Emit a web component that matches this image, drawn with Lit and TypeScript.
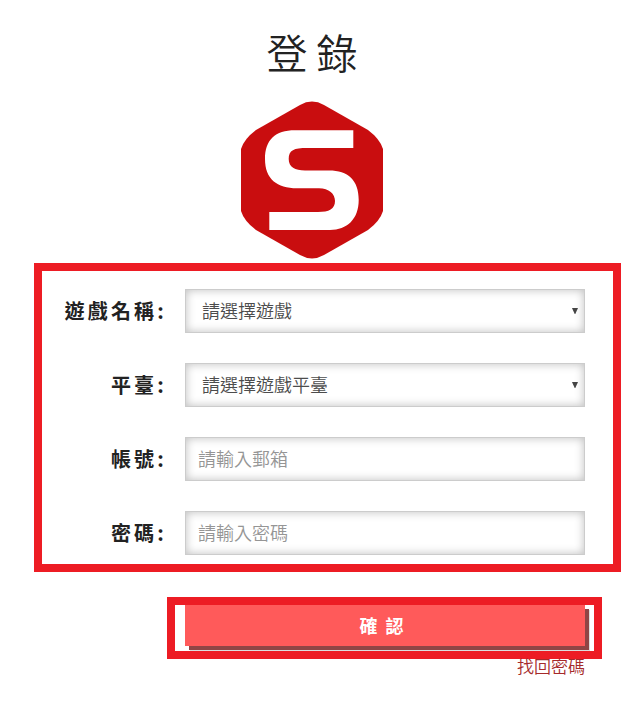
import { LitElement, html, css, svg } from 'lit';
import { customElement, property } from 'lit/decorators.js';

/**
 * Hexagon logo with the white "S" mark.
 */
@customElement('brand-logo')
export class BrandLogo extends LitElement {
  static styles = css`
    :host {
      display: block;
      width: 142px;
      height: 158px;
    }

    svg {
      display: block;
    }
  `;

  render() {
    return html`
      <svg width="142" height="158" viewBox="0 0 142 158" aria-hidden="true">
        ${svg`
          <path fill="#c90d0f" d="M59 4 Q71 -2.8 83 4 L127 29 Q139 38 142 48 V110 Q139 120 127 129 L83 154 Q71 160.8 59 154 L15 129 Q3 120 0 110 V48 Q3 38 15 29Z" />
          <path fill="#fff" d="M112.3 29.3 V47 H66 C53 47 47.7 49 47.7 58 C47.7 66 54 69.5 64 69.5 H88 C107 69.5 117.7 79 117.7 99 C117.7 118 106 129 89 129 H28.3 V111 H77 C88 111 94 108 94 100 C94 93 88 87.3 78 87.3 H56 C36 87.3 24 78 24 58 C24 39 34 29.3 54 29.3Z" />
        `}
      </svg>
    `;
  }
}

/**
 * Labelled form row. Renders a select when kind is "select", an input otherwise.
 */
@customElement('form-row')
export class FormRow extends LitElement {
  @property() label = '';
  @property() hint = '';
  @property() kind = 'text';

  static styles = css`
    :host {
      display: flex;
      align-items: center;
      height: 44px;
    }

    .label {
      width: 125px;
      margin-right: 18px;
      text-align: right;
      font-size: 20px;
      font-weight: 700;
      letter-spacing: 3.2px;
      line-height: 44px;
      white-space: nowrap;
      color: #222;
    }

    .field {
      display: flex;
      position: relative;
      width: 400px;
      height: 44px;
    }

    .control {
      appearance: none;
      box-sizing: border-box;
      width: 100%;
      height: 100%;
      margin: 0;
      padding: 0 13px 2px 12px;
      border: 1px solid #ccc;
      border-radius: 0;
      background: #fff;
      box-shadow: inset 0 0 10px rgba(0, 0, 0, 0.26);
      font-family: inherit;
      font-size: 18px;
      font-weight: 350;
      color: #4c4c4c;
      outline: none;
    }

    select.control {
      padding-left: 16px;
    }

    .control::placeholder {
      color: #959595;
      opacity: 1;
    }

    .arrow {
      position: absolute;
      right: 7px;
      top: 19px;
      pointer-events: none;
    }
  `;

  renderControl() {
    if (this.kind === 'select') {
      return html`
        <select class="control">
          <option>${this.hint}</option>
        </select>
        <svg class="arrow" width="6" height="6" viewBox="0 0 6 6">
          <path fill="#444" d="M0 0H6L3.3 6H2.7Z" />
        </svg>
      `;
    }
    return html`<input class="control" type=${this.kind} placeholder=${this.hint} />`;
  }

  render() {
    return html`
      <span class="label">${this.label}:</span>
      <div class="field">${this.renderControl()}</div>
    `;
  }
}

const ROWS = [
  { label: '遊戲名稱', hint: '請選擇遊戲', kind: 'select' },
  { label: '平臺', hint: '請選擇遊戲平臺', kind: 'select' },
  { label: '帳號', hint: '請輸入郵箱', kind: 'text' },
  { label: '密碼', hint: '請輸入密碼', kind: 'password' },
];

@customElement('app-root')
export class AppRoot extends LitElement {
  static styles = css`
    :host {
      display: flex;
      flex-direction: column;
      box-sizing: border-box;
      width: 644px;
      height: 710px;
      padding-top: 20px;
      background: #fff;
      font-family: 'Noto Sans CJK TC', sans-serif;
    }

    .header {
      display: flex;
      flex-direction: column;
      align-items: center;
      width: 624px;
    }

    .title {
      margin: 0 0 19px;
      font-size: 41px;
      font-weight: 350;
      line-height: 62px;
      color: #222;
    }

    .fields {
      display: flex;
      flex-direction: column;
      gap: 30px;
      box-sizing: border-box;
      width: 587px;
      height: 309px;
      margin: 4px 0 0 34px;
      padding-top: 18px;
      border: 8px solid #ed1c24;
    }

    .submit {
      box-sizing: border-box;
      width: 435px;
      height: 62px;
      margin: 25px 0 0 167px;
      padding-left: 10px;
      border: 8px solid #ed1c24;
    }

    .button {
      display: block;
      width: 400px;
      height: 41px;
      padding: 0 5px 0 0;
      border: 0;
      background: #ff5a5a;
      box-shadow: 4px 4px 0 #8f4545, 5px 5px 0 #ddd;
      font-family: inherit;
      font-size: 18px;
      font-weight: 700;
      line-height: 41px;
      letter-spacing: 2px;
      color: #fff;
    }

    .recover {
      align-self: flex-start;
      width: 585px;
      margin-top: -6px;
      text-align: right;
      font-size: 17px;
      font-weight: 350;
      line-height: 25px;
      text-decoration: none;
      color: #a52a2a;
    }
  `;

  render() {
    return html`
      <div class="header">
        <h1 class="title">登 錄</h1>
        <brand-logo></brand-logo>
      </div>
      <div class="fields">
        ${ROWS.map((row) => html`
          <form-row .label=${row.label} .hint=${row.hint} .kind=${row.kind}></form-row>
        `)}
      </div>
      <div class="submit">
        <button class="button">確 認</button>
      </div>
      <a class="recover" href="#">找回密碼</a>
    `;
  }
}
